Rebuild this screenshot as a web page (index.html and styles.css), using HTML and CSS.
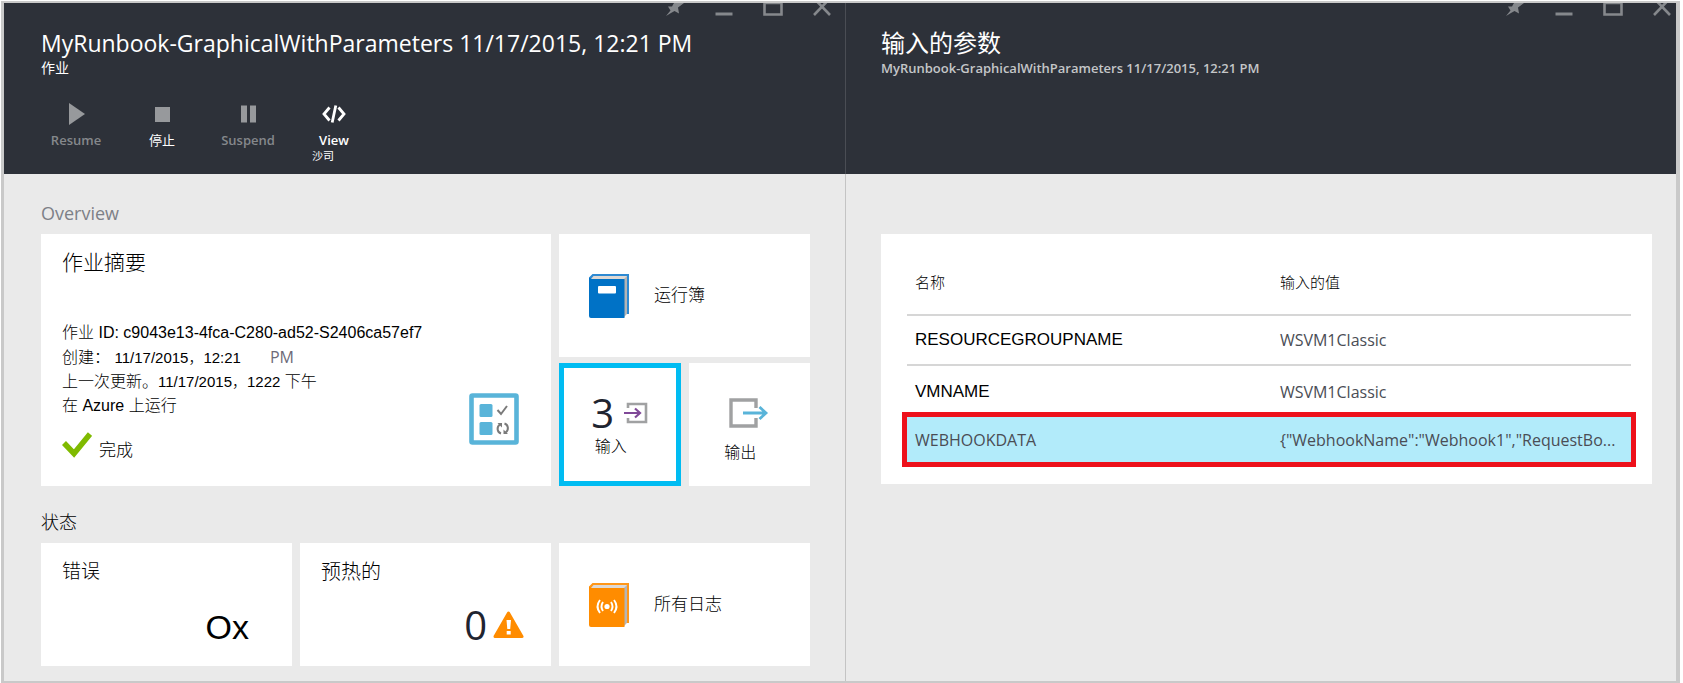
FILE: index.html
```html
<!DOCTYPE html>
<html lang="zh-CN">
<head>
<meta charset="utf-8">
<title>MyRunbook-GraphicalWithParameters</title>
<link rel="stylesheet" href="styles.css">
</head>
<body>
<svg class="defs" width="0" height="0" aria-hidden="true">
  <symbol id="pin" viewBox="0 0 20 14"><path d="M1 13 5.500 7.500 3 3.500 7 3.500 9 0H19L13 4.500 14 10.500 9.500 8 6 10z" fill="currentColor"/></symbol>
  <symbol id="min" viewBox="0 0 20 14"><path d="M1.500 9.500h17v3h-17z" fill="currentColor"/></symbol>
  <symbol id="max" viewBox="0 0 20 14"><path d="M1.500 0V11.500H18.500V0M1 0H19" fill="none" stroke="currentColor" stroke-width="2.600"/></symbol>
  <symbol id="close" viewBox="0 0 20 14"><path d="M2 12 14.500-1M18 12 5.500-1" fill="none" stroke="currentColor" stroke-width="2.600"/></symbol>
</svg>
<main class="portal">
  <section class="blade">
    <header class="blade-head">
      <div class="controls">
        <button class="ctl" aria-label="固定"><svg><use href="#pin"/></svg></button>
        <button class="ctl" aria-label="最小化"><svg><use href="#min"/></svg></button>
        <button class="ctl" aria-label="最大化"><svg><use href="#max"/></svg></button>
        <button class="ctl" aria-label="关闭"><svg><use href="#close"/></svg></button>
      </div>
      <h1 class="title">MyRunbook-GraphicalWithParameters 11/17/2015, 12:21 PM</h1>
      <p class="subtitle">作业</p>
      <nav class="toolbar">
        <button class="cmd"><svg width="24" height="28" viewBox="0 0 24 28"><path d="M5 3 21 14 5 25z" fill="#97999c"/></svg><span>Resume</span></button>
        <button class="cmd cmd-zh"><svg width="24" height="28" viewBox="0 0 24 28"><path d="M5 7h15v15H5z" fill="#97999c"/></svg><span>停止</span></button>
        <button class="cmd"><svg width="24" height="28" viewBox="0 0 24 28"><path d="M5 5.500h6v17H5zM14 5.500h6v17h-6z" fill="#97999c"/></svg><span>Suspend</span></button>
        <button class="cmd cmd-on"><svg width="24" height="28" viewBox="0 0 24 28"><path d="M7.500 7.500 2 14l5.500 6.500M16.500 7.500 22 14l-5.500 6.500M13.800 5.500 10.200 22.500" fill="none" stroke="#fff" stroke-width="2.800"/></svg><span>View</span><small>沙司</small></button>
      </nav>
    </header>
    <div class="blade-body">
      <h2 class="section overview">Overview</h2>
      <div class="tiles">
        <article class="tile summary">
          <h3 class="tile-title">作业摘要</h3>
          <div class="summary-body">
            <div class="details">
              <p>作业 ID: c9043e13-4fca-C280-ad52-S2406ca57ef7</p>
              <p>创建： <span class="date">11/17/2015，12:21</span><span class="pm">PM</span></p>
              <p>上一次更新。<span class="date">11/17/2015，1222</span> 下午</p>
              <p>在 Azure 上运行</p>
              <p class="state"><svg width="30" height="28" viewBox="0 0 30 28"><path d="M2 12 12 22.500 28 3" fill="none" stroke="#7fba00" stroke-width="5.500"/></svg>完成</p>
            </div>
            <svg class="job-icon" width="50" height="52" viewBox="0 0 50 52">
              <rect x="2.500" y="2.500" width="45" height="47" rx="1" fill="#fff" stroke="#59b4d9" stroke-width="4.600"/>
              <rect x="10.500" y="11" width="13" height="13" rx="1.500" fill="#59b4d9"/><rect x="10.500" y="29" width="13" height="13" rx="1.500" fill="#59b4d9"/>
              <path d="M28.500 17 32 21 38 13M32 40.500A5 5 0 0 1 31 31.500M35.500 30.500A5 5 0 0 1 36.500 39.500" fill="none" stroke="#7a7a7a" stroke-width="2"/>
              <path d="M28.500 30H33V34.500zM39 41H34.500V36.500z" fill="#7a7a7a"/>
            </svg>
          </div>
        </article>
        <a class="tile link" href="#runbook">
          <svg width="41" height="44" viewBox="0 0 41 44"><path d="M3.500 0H40V40H36V5H0V3.500z" fill="#2f8ad2"/><path d="M4.500 2H38V40L35 43V5H2z" fill="#ded9d5"/><path d="M35 5 38 2V39.500l-3 3.500z" fill="#b5b5b5"/><path d="M0 3.500 2.500 5H35.500V44H2a2 2 0 0 1-2-2z" fill="#0072c6"/><rect x="9" y="12" width="18" height="7.500" rx="1" fill="#fff"/></svg>
          <span>运行簿</span>
        </a>
        <div class="pair">
          <a class="tile io active" href="#input">
            <span class="io-top"><b class="num">3</b><svg width="24" height="24" viewBox="0 0 24 24"><path d="M4 7V3H22V21H4V17" fill="none" stroke="#a0a1a2" stroke-width="2.600"/><path d="M0 12H16M11 7.500 16 12 11 16.500" fill="none" stroke="#804998" stroke-width="2.200"/></svg></span>
            <span class="io-label">输入</span>
          </a>
          <a class="tile io" href="#output">
            <span class="io-top"><svg width="40" height="30" viewBox="0 0 40 30"><path d="M27 10V2H2V28H27V20" fill="none" stroke="#a0a1a2" stroke-width="3.400"/><path d="M14 15H37M30.500 9 37 15 30.500 21" fill="none" stroke="#59b4d9" stroke-width="2.800"/></svg></span>
            <span class="io-label low">输出</span>
          </a>
        </div>
      </div>
      <h2 class="section status">状态</h2>
      <div class="tiles">
        <article class="tile stat"><h3 class="tile-title">错误</h3><p class="value ox">Ox</p></article>
        <article class="tile stat"><h3 class="tile-title warm">预热的</h3><p class="value num">0<svg width="31" height="28" viewBox="0 0 31 28"><path d="M15.500 2 29 25.500H2z" fill="#ff8c00" stroke="#ff8c00" stroke-width="3" stroke-linejoin="round"/><path d="M13.500 9h4.500l-.8 9h-2.900zM13.700 20h4v3.500h-4z" fill="#fff"/></svg></p></article>
        <a class="tile link" href="#logs">
          <svg width="41" height="44" viewBox="0 0 41 44"><path d="M3.500 0H40V40H36V5H0V3.500z" fill="#ff971a"/><path d="M4.500 2H38V40L35 43V5H2z" fill="#ded9d5"/><path d="M35 5 38 2V39.500l-3 3.500z" fill="#b5b5b5"/><path d="M0 3.500 2.500 5H35.500V44H2a2 2 0 0 1-2-2z" fill="#ff8c00"/><circle cx="18" cy="23.500" r="2.600" fill="#fff"/><path d="M14 19Q11 23.500 14 28M22 19Q25 23.500 22 28M11 17Q6 23.500 11 30M25 17Q30 23.500 25 30" fill="none" stroke="#fff" stroke-width="1.900"/></svg>
          <span>所有日志</span>
        </a>
      </div>
    </div>
  </section>
  <section class="blade params">
    <header class="blade-head">
      <div class="controls">
        <button class="ctl" aria-label="固定"><svg><use href="#pin"/></svg></button>
        <button class="ctl" aria-label="最小化"><svg><use href="#min"/></svg></button>
        <button class="ctl" aria-label="最大化"><svg><use href="#max"/></svg></button>
        <button class="ctl" aria-label="关闭"><svg><use href="#close"/></svg></button>
      </div>
      <h1 class="title">输入的参数</h1>
      <p class="subtitle">MyRunbook-GraphicalWithParameters 11/17/2015, 12:21 PM</p>
    </header>
    <div class="blade-body">
      <div class="card">
        <table class="grid">
          <thead><tr><th scope="col">名称</th><th scope="col">输入的值</th></tr></thead>
          <tbody>
            <tr class="first"><td class="name">RESOURCEGROUPNAME</td><td>WSVM1Classic</td></tr>
            <tr class="second"><td class="name">VMNAME</td><td>WSVM1Classic</td></tr>
            <tr class="marked"><td>WEBHOOKDATA</td><td>{"WebhookName":"Webhook1","RequestBo...</td></tr>
          </tbody>
        </table>
      </div>
    </div>
  </section>
</main>
</body>
</html>
```
FILE: styles.css
```css
* { box-sizing: border-box; margin: 0; padding: 0; }

body {
  background: #fff;
  color: #000;
  font: 300 16px/24px "Liberation Sans", "Noto Sans CJK SC", sans-serif;
  padding: 1px 3px 1px 1px;
}

.defs { display: block; }
svg { flex: none; }
a { color: inherit; text-decoration: none; }
button { background: none; border: 0; color: inherit; }

.portal {
  display: grid;
  grid-template-columns: 842fr 830fr;
  min-height: calc(100vh - 2px);
  border: solid #c9c9c9;
  border-width: 2px 4px 3px 3px;
  background: #eaeaea;
}

.blade { display: flex; flex-direction: column; min-width: 0; }

.blade-head {
  height: 171px;
  padding-left: 37px;
  border-right: 1px solid #4a4d54;
  background: #2d3139;
  color: #fff;
}
.params .blade-head { padding-left: 35px; border-right: 0; }

.controls {
  display: flex;
  justify-content: flex-end;
  gap: 29px;
  height: 14px;
  padding-right: 13px;
  color: #85888c;
}
.params .controls { padding-right: 4px; }
.ctl { width: 20px; height: 14px; overflow: hidden; }
.ctl svg { display: block; width: 20px; height: 14px; }

.title {
  margin-top: 11px;
  font: 23px/30px "Open Sans", "Noto Sans CJK SC", sans-serif;
  white-space: nowrap;
}
.params .title { font-size: 24px; }
.subtitle {
  font: 14px/20px "Open Sans", "Noto Sans CJK SC", sans-serif;
  white-space: nowrap;
}
.params .subtitle { color: #c4c6c8; font-size: 13px; font-weight: 600; }

.toolbar { display: flex; margin: 22px 0 0 -8px; }
.cmd {
  display: flex;
  flex-direction: column;
  align-items: center;
  width: 86px;
  color: #85888c;
  font: 600 13px/24px "Open Sans", "Noto Sans CJK SC", sans-serif;
}
.cmd-zh { color: #fff; font-weight: 400; }
.cmd-on { color: #fff; }
.cmd small { margin-top: -2px; padding-right: 22px; font-size: 11px; font-weight: 400; line-height: 12px; }

.blade-body {
  flex: 1;
  padding: 28px 35px 15px 37px;
  border-right: 1px solid #c4c4c4;
}
.section { font: 300 18px/22px "Open Sans", "Noto Sans CJK SC", sans-serif; margin-bottom: 10px; }
.overview { color: #7d8087; font-weight: 400; }
.status { margin-top: 25px; }

.tiles {
  display: grid;
  grid-template-columns: repeat(3, 1fr);
  grid-auto-rows: minmax(123px, auto);
  gap: 6px 8px;
}
.tile { background: #fff; }
.tile-title { font-size: 19px; font-weight: 300; line-height: 28px; }

.summary { grid-column: span 2; grid-row: span 2; padding: 15px 32px 0 21px; }
.summary .tile-title { font-size: 21px; }
.summary-body { display: flex; justify-content: space-between; align-items: flex-end; padding-top: 44px; }
.date { font-size: 15px; }
.pm { margin-left: 29px; color: #6d6a78; font-family: "Open Sans", sans-serif; font-weight: 400; }
.state { display: flex; gap: 7px; padding: 13px 0 0; font-size: 17px; line-height: 40px; }
.job-icon { margin-bottom: 26px; }

.link { display: flex; align-items: center; gap: 24px; padding: 0 30px; font-size: 17px; }

.pair { display: grid; grid-template-columns: 1fr 1fr; gap: 8px; }
.io { display: flex; flex-direction: column; align-items: center; padding-top: 28px; }
.active { padding-top: 23px; border: 5px solid #00bcf2; }
.io-top { display: flex; align-items: center; gap: 10px; height: 44px; }
.io-label { padding-right: 18px; }
.low { line-height: 36px; }
.num { color: #1f2430; font: 40px/40px "Open Sans", sans-serif; }

.stat { padding: 15px 27px 0 21px; }
.value { display: flex; justify-content: flex-end; align-items: center; gap: 6px; margin-top: 19px; }
.ox { padding-right: 16px; font-size: 34px; line-height: 44px; }
.warm { font-size: 20px; }

.params .blade-body { padding: 60px 24px 15px 35px; border-right: 0; }
.card { padding: 0 21px 22px 26px; background: #fff; }
.grid { width: 100%; border-collapse: collapse; table-layout: fixed; }
.grid th, .grid td {
  padding-left: 8px;
  text-align: left;
  font: 16px/24px "Open Sans", sans-serif;
  color: #4a4d55;
  white-space: nowrap;
}
.grid th:first-child { width: 50.400%; }
.grid th {
  height: 81px;
  padding-top: 18px;
  color: #000;
  font: 300 15px/24px "Liberation Sans", "Noto Sans CJK SC", sans-serif;
}
.grid td.name { color: #000; font: 17px/24px "Liberation Sans", sans-serif; }
.grid thead tr, .first { border-bottom: 2px solid #d6d6d6; }
.first { height: 50px; }
.second { height: 52px; }
.marked { height: 45px; background: #b2ebfa; outline: 5px solid #ed111b; }
```
